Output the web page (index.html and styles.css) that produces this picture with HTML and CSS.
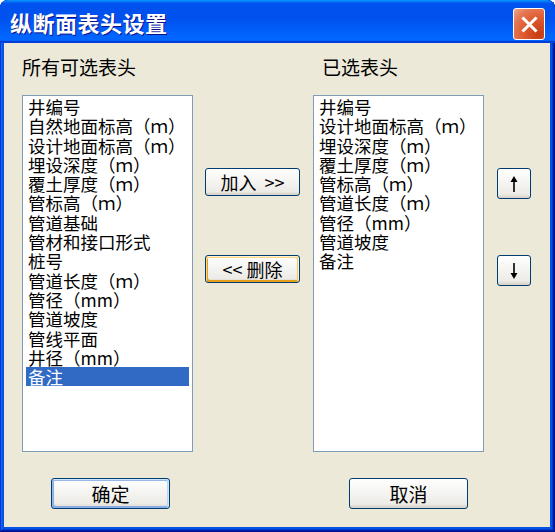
FILE: index.html
```html
<!DOCTYPE html>
<html lang="zh-CN">
<head>
    <meta charset="UTF-8">
    <meta name="viewport" content="width=device-width, initial-scale=1.0">
    <title>纵断面表头设置</title>
    <link rel="stylesheet" href="styles.css">
</head>
<body>
    <div class="window">
        <div class="title-bar">
            <span class="title-text">纵断面表头设置</span>
            <button class="close-btn" aria-label="关闭">
                <svg width="17" height="17" viewBox="0 0 17 17">
                    <path d="M2.5 2.5 L14.5 14.5 M14.5 2.5 L2.5 14.5" stroke="#fff" stroke-width="3" stroke-linecap="square" fill="none"/>
                </svg>
            </button>
        </div>

        <div class="client">
            <div class="label label-left">所有可选表头</div>
            <div class="label label-right">已选表头</div>

            <ul class="listbox list-left">
                <li>井编号</li>
                <li>自然地面标高（ｍ）</li>
                <li>设计地面标高（ｍ）</li>
                <li>埋设深度（ｍ）</li>
                <li>覆土厚度（ｍ）</li>
                <li>管标高（ｍ）</li>
                <li>管道基础</li>
                <li>管材和接口形式</li>
                <li>桩号</li>
                <li>管道长度（ｍ）</li>
                <li>管径（mm）</li>
                <li>管道坡度</li>
                <li>管线平面</li>
                <li>井径（mm）</li>
                <li class="selected">备注</li>
            </ul>

            <div class="mid-actions">
                <button class="btn btn-move">加入&nbsp;&nbsp;&gt;&gt;</button>
                <button class="btn btn-move hot">&lt;&lt;&nbsp;删除</button>
            </div>

            <ul class="listbox list-right">
                <li>井编号</li>
                <li>设计地面标高（ｍ）</li>
                <li>埋设深度（ｍ）</li>
                <li>覆土厚度（ｍ）</li>
                <li>管标高（ｍ）</li>
                <li>管道长度（ｍ）</li>
                <li>管径（mm）</li>
                <li>管道坡度</li>
                <li>备注</li>
            </ul>

            <div class="order-actions">
                <button class="btn btn-arrow" aria-label="上移">
                    <svg width="10" height="16" viewBox="0 0 10 16">
                        <path d="M5 0 L1.5 6 L8.5 6 Z" fill="#000"/>
                        <path d="M5 5 L5 16" stroke="#000" stroke-width="1.6"/>
                    </svg>
                </button>
                <button class="btn btn-arrow" aria-label="下移">
                    <svg width="10" height="16" viewBox="0 0 10 16">
                        <path d="M5 0 L5 11" stroke="#000" stroke-width="1.6"/>
                        <path d="M5 16 L1.5 10 L8.5 10 Z" fill="#000"/>
                    </svg>
                </button>
            </div>

            <div class="footer footer-left">
                <button class="btn btn-dialog default">确定</button>
            </div>
            <div class="footer footer-right">
                <button class="btn btn-dialog">取消</button>
            </div>
        </div>
    </div>
</body>
</html>
```

FILE: styles.css
```css
body {
    margin: 0;
    background-color: #ffffff;
    font-family: "Noto Sans CJK SC", "Liberation Sans", sans-serif;
}

.window {
    width: 555px;
    height: 532px;
    display: flex;
    flex-direction: column;
    border-radius: 8px 8px 0 0;
    overflow: hidden;
    background-color: #0553e2;
    box-shadow: inset -1px -1px #00138c, inset 1px 1px #0831d9,
                inset -2px -2px #001ea0, inset 2px 2px #166aee,
                inset -3px -3px #003bda, inset 3px 3px #0855dd;
}

.title-bar {
    height: 43px;
    flex-shrink: 0;
    display: flex;
    align-items: center;
    justify-content: space-between;
    padding: 0 10px 0 10px;
    background: linear-gradient(180deg, #0997ff, #0053ee 8%, #0050ee 40%, #0066ff 88%, #0066ff 93%, #005bff 95%, #003dd7 96%, #003dd7);
    border-radius: 8px 8px 0 0;
}

.title-text {
    color: #ffffff;
    font-size: 22px;
    font-weight: bold;
    letter-spacing: 0.5px;
    text-shadow: 1px 1px #0f1089;
    margin-top: 1px;
}

.close-btn {
    align-self: flex-start;
    margin-top: 8px;
    width: 32px;
    height: 32px;
    padding: 0;
    display: flex;
    align-items: center;
    justify-content: center;
    border: 1px solid #ffffff;
    border-radius: 3px;
    background: radial-gradient(circle at 85% 85%, #c63b12 0, #dd5a2e 45%, #e57856 75%, #f0a88f 100%);
}

.client {
    flex: 1;
    margin: 0 5px 5px 4px;
    background-color: #ece9d8;
    display: grid;
    grid-template-columns: 171px 12px 95px 13px 171px 13px 34px;
    grid-template-rows: 39px 357px auto;
    padding: 13px 0 0 18px;
    font-size: 17.5px;
    color: #000000;
}

.label {
    font-size: 19px;
    line-height: 22px;
    white-space: nowrap;
}

.label-left {
    grid-column: 1 / 4;
}

.label-right {
    grid-column: 5 / 8;
    padding-left: 9px;
}

.listbox {
    list-style: none;
    margin: 0;
    padding: 1px 3px;
    border: 1px solid #7f9db9;
    background-color: #ffffff;
    overflow: hidden;
}

.list-left {
    grid-column: 1;
}

.list-right {
    grid-column: 5;
}

.listbox li {
    height: 19.3px;
    line-height: 19.3px;
    padding-left: 2px;
    white-space: nowrap;
}

.listbox li.selected {
    background-color: #316ac5;
    color: #ffffff;
}

.mid-actions,
.order-actions {
    display: flex;
    flex-direction: column;
    padding-top: 73px;
}

.mid-actions {
    grid-column: 3;
    gap: 59px;
}

.order-actions {
    grid-column: 7;
    gap: 56px;
}

.btn {
    font: inherit;
    color: #000000;
    padding: 0;
    border: 1px solid #003c74;
    border-radius: 3px;
    background: linear-gradient(180deg, #ffffff, #ecebe6 86%, #d6d0c5);
    display: flex;
    align-items: center;
    justify-content: center;
    cursor: pointer;
}

.btn.default {
    box-shadow: inset -1px 1px #cee7ff, inset 1px 2px #98b8ea,
                inset -2px 2px #bcd4f6, inset 1px -1px #89ade4,
                inset 2px -2px #89ade4;
}

.btn.hot {
    box-shadow: inset -1px 1px #fff0cf, inset 1px 2px #fdd889,
                inset -2px 2px #fbc761, inset 2px -2px #e5a01a;
}

.btn-move {
    width: 95px;
    height: 28px;
    font-size: 18px;
}

.btn-arrow {
    width: 34px;
    height: 31px;
}

.footer {
    padding-top: 26px;
}

.footer-left {
    grid-column: 1 / 4;
    padding-left: 29px;
}

.footer-right {
    grid-column: 5 / 8;
    padding-left: 36px;
}

.btn-dialog {
    width: 119px;
    height: 31px;
    font-size: 19px;
}
```
